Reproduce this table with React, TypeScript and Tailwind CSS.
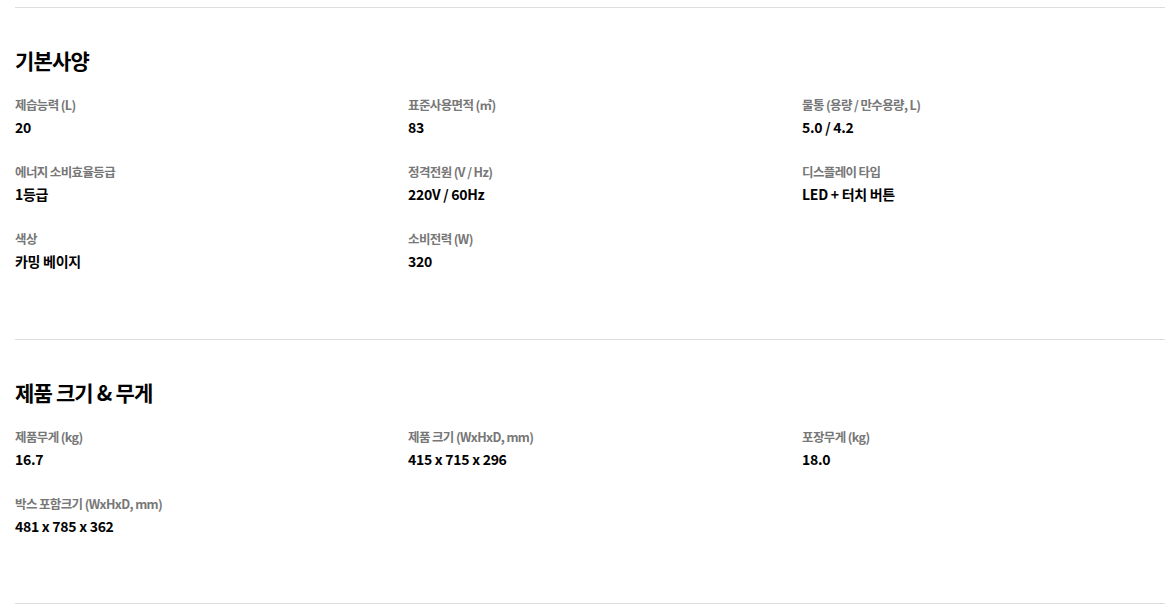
const basic = [
  { label: "제습능력 (L)", value: "20" },
  { label: "표준사용면적 (㎡)", value: "83" },
  { label: "물통 (용량 / 만수용량, L)", value: "5.0 / 4.2" },
  { label: "에너지 소비효율등급", value: "1등급" },
  { label: "정격전원 (V / Hz)", value: "220V / 60Hz" },
  { label: "디스플레이 타입", value: "LED + 터치 버튼" },
  { label: "색상", value: "카밍 베이지" },
  { label: "소비전력 (W)", value: "320" },
];

const size = [
  { label: "제품무게 (kg)", value: "16.7" },
  { label: "제품 크기 (WxHxD, mm)", value: "415 x 715 x 296" },
  { label: "포장무게 (kg)", value: "18.0" },
  { label: "박스 포함크기 (WxHxD, mm)", value: "481 x 785 x 362" },
];

function SpecSection({
  title,
  items,
  bottom,
}: {
  title: string;
  items: { label: string; value: string }[];
  bottom: string;
}) {
  return (
    <section className={`border-t border-[#dddddd] pt-[37px] ${bottom}`}>
      <h2 className="text-[21px] leading-[30px] font-bold tracking-[-0.04em] text-black">{title}</h2>
      <dl className="mt-[20px] grid grid-cols-[393px_394px_1fr] gap-y-[24px]">
        {items.map((it) => (
          <div key={it.label}>
            <dt className="text-[12.5px] leading-[20px] font-semibold tracking-[-0.05em] text-[#777777]">
              {it.label}
            </dt>
            <dd className="mt-[1px] text-[14px] leading-[22px] font-bold tracking-[-0.02em] text-black">
              {it.value}
            </dd>
          </div>
        ))}
      </dl>
    </section>
  );
}

export default function App() {
  return (
    <div
      className="h-[607px] w-[1172px] overflow-hidden bg-white pt-[7px] pl-[15px] pr-[7px]"
      style={{ fontFamily: '"Noto Sans CJK KR", "Noto Sans", sans-serif' }}
    >
      <SpecSection title="기본사양" items={basic} bottom="pb-[67px]" />
      <SpecSection title="제품 크기 & 무게" items={size} bottom="pb-[66px]" />
      <div className="border-t border-[#dddddd]" />
    </div>
  );
}
